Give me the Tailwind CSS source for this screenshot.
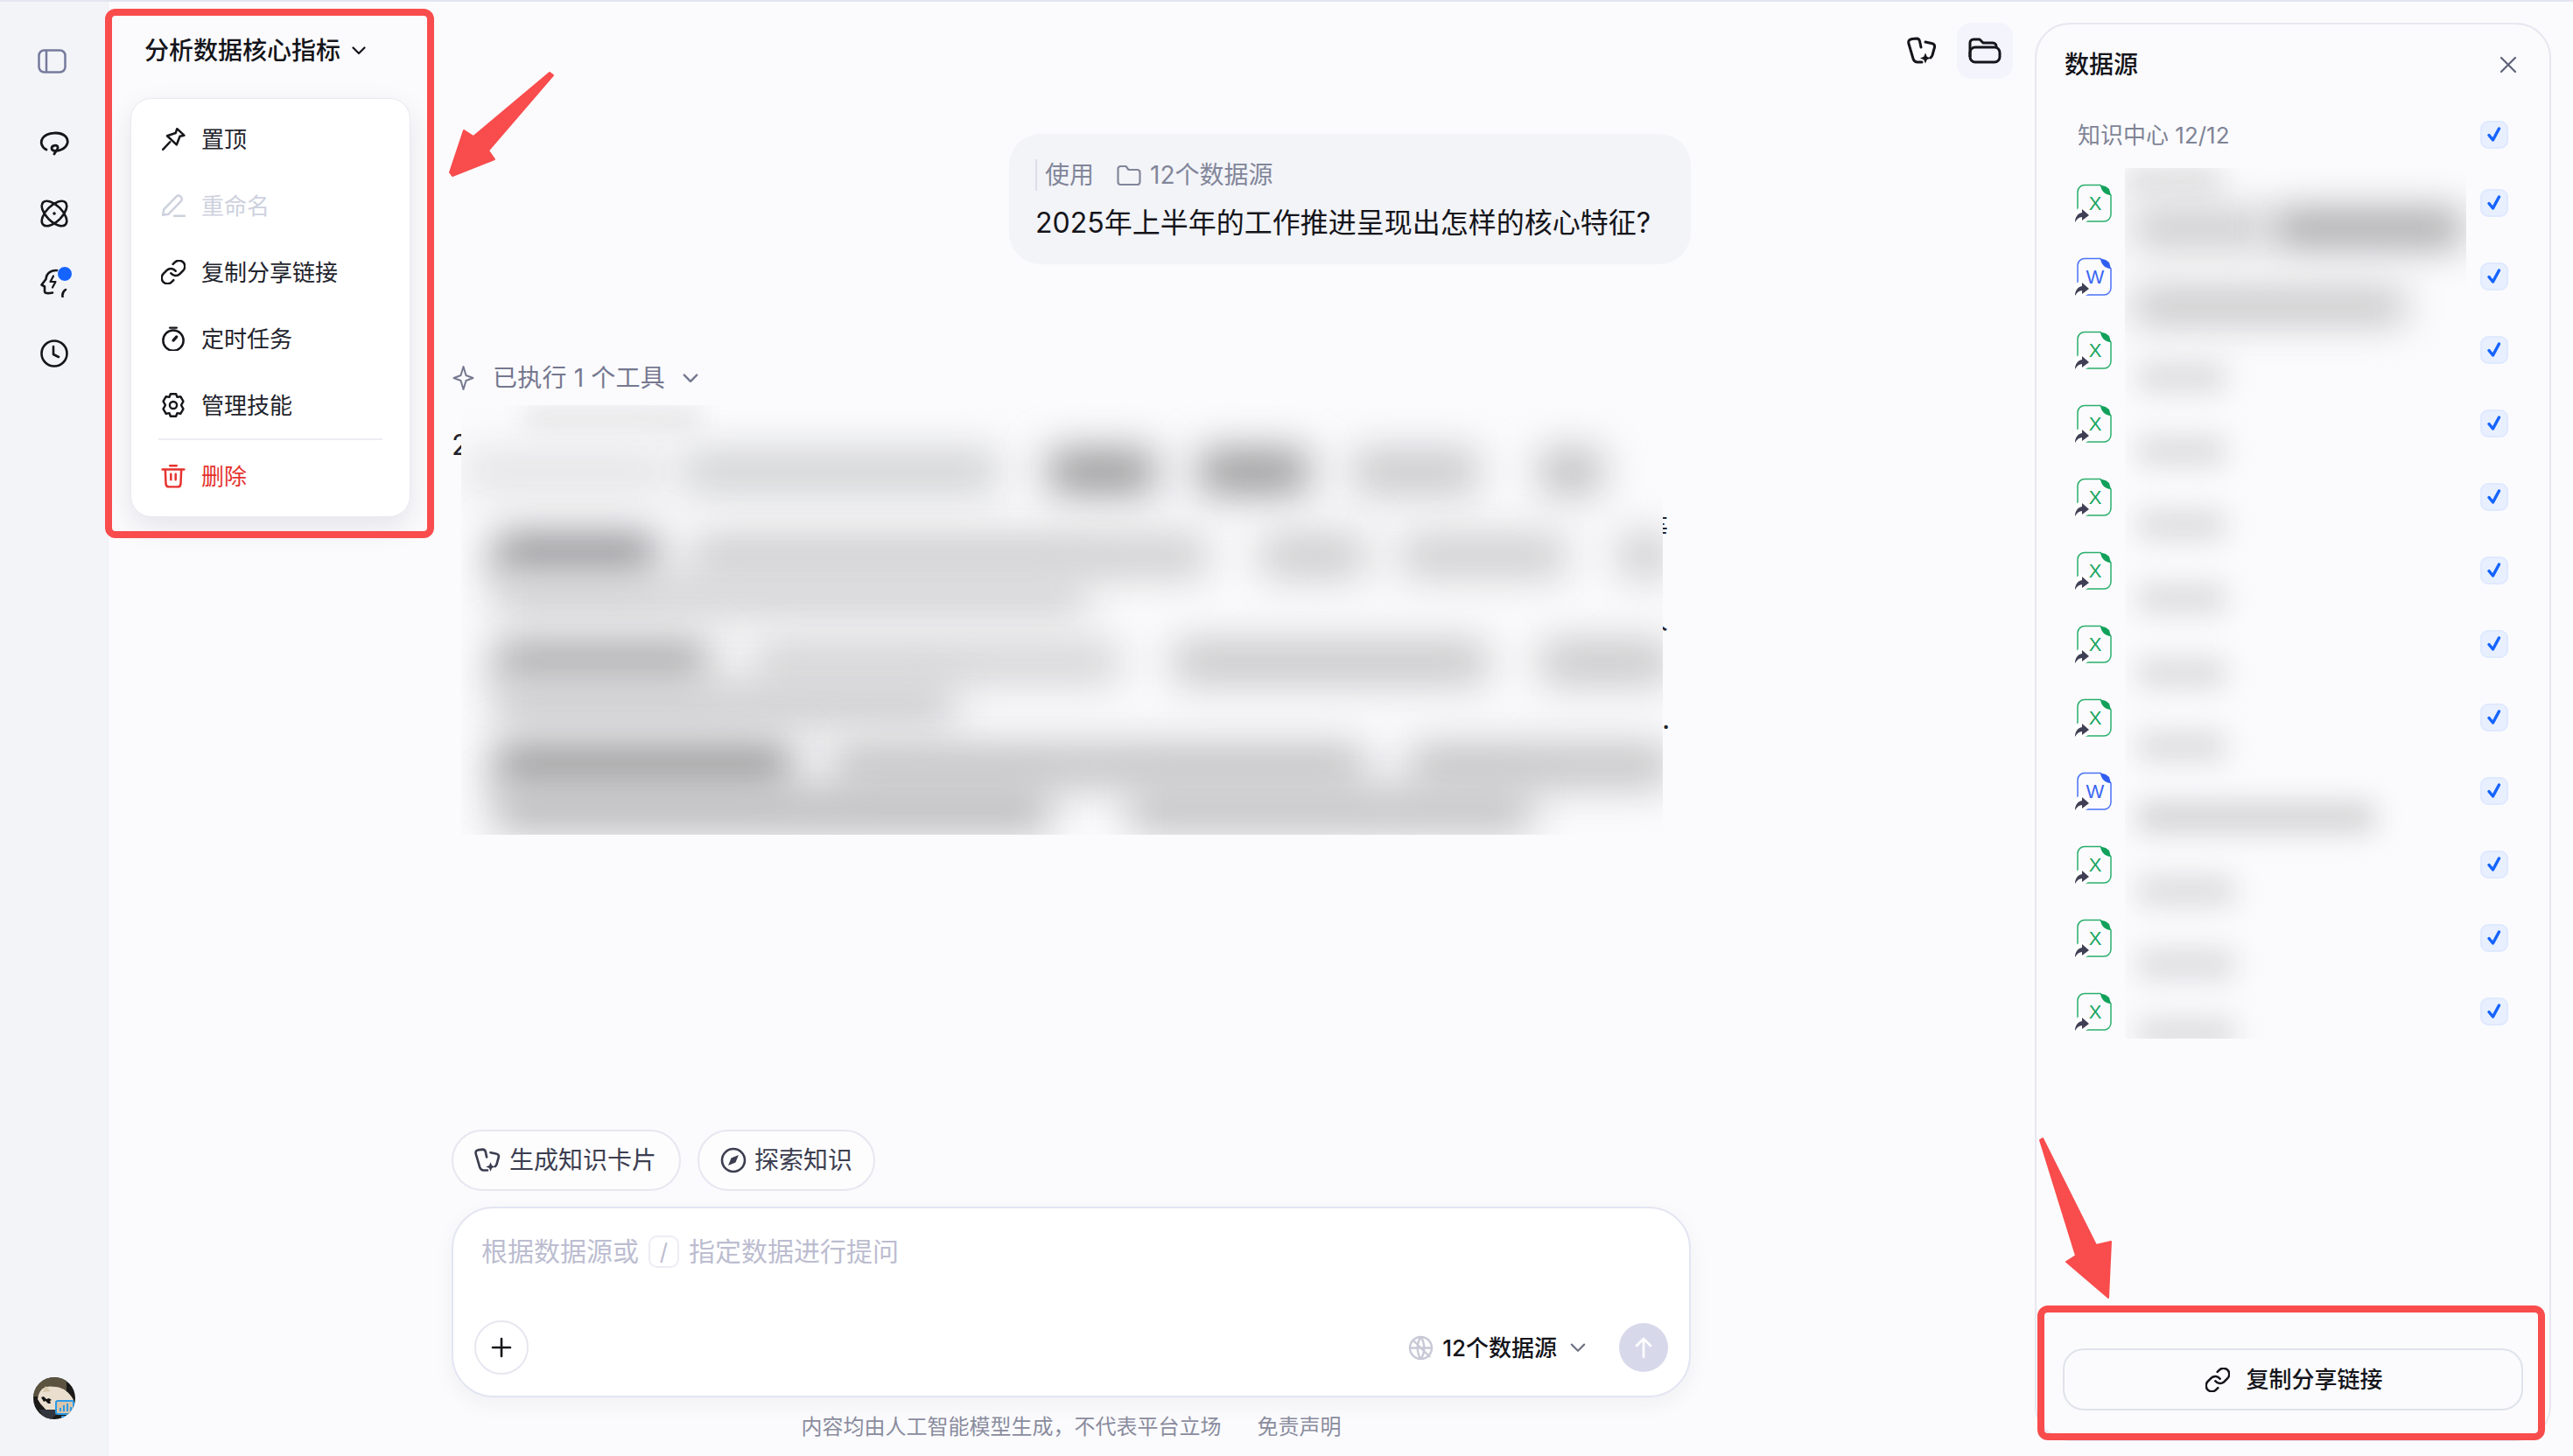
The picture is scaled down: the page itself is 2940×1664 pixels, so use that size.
<!DOCTYPE html>
<html lang="zh-CN">
<head>
<meta charset="utf-8">
<title>分析数据核心指标</title>
<script src="https://cdn.jsdelivr.net/npm/@tailwindcss/browser@4"></script>
</head>
<body class="relative w-[2940px] h-[1664px] overflow-hidden bg-[#fbfbfd] text-[#14141a] font-[Inter,'Noto_Sans_CJK_SC',sans-serif]">

<!-- shared icons -->
<svg class="hidden">
    <symbol id="xls" viewBox="0 0 44 46">
        <path d="M12 2.500h19l12 11.500v22a8 8 0 0 1-8 8H13a8 8 0 0 1-8-8V10a8 8 0 0 1 8-7.500z" fill="none" stroke="#2cae6c" stroke-width="1.500"/>
        <path d="M31 2.500c1 7 5 11 12 11.500l-2-7-4-3z" fill="#12a15b"/>
        <text x="25" y="31" text-anchor="middle" font-family="Liberation Sans" font-size="22" fill="#18a55f">X</text>
        <circle cx="10" cy="37" r="9" fill="#fff"/>
        <path d="M2 45c0-6 3-10 8-11v-4l8 7-8 6v-4c-3 0-6 2-8 6z" fill="#3f3f55"/>
    </symbol>
    <symbol id="doc" viewBox="0 0 44 46">
        <path d="M12 2.500h19l12 11.500v22a8 8 0 0 1-8 8H13a8 8 0 0 1-8-8V10a8 8 0 0 1 8-7.500z" fill="none" stroke="#4a72f5" stroke-width="1.500"/>
        <path d="M31 2.500c1 7 5 11 12 11.500l-2-7-4-3z" fill="#2f5ff0"/>
        <text x="25" y="31" text-anchor="middle" font-family="Liberation Sans" font-size="22" fill="#3a66f2">W</text>
        <circle cx="10" cy="37" r="9" fill="#fff"/>
        <path d="M2 45c0-6 3-10 8-11v-4l8 7-8 6v-4c-3 0-6 2-8 6z" fill="#3f3f55"/>
    </symbol>
    <symbol id="check" viewBox="0 0 32 32">
        <rect x="1" y="1" width="30" height="30" rx="8" fill="#e8f0ff" stroke="#dfe9ff" stroke-width="2"/>
        <path d="M10 16.500l4.500 5.500L21.500 9" fill="none" stroke="#1664ff" stroke-width="3.500" stroke-linecap="round" stroke-linejoin="round"/>
    </symbol>
    <symbol id="cards" viewBox="0 0 34 32">
        <path d="M2 8c-1-4 1-5 4-5.500l5-.5c2 0 3 1 3.500 3L16 12M17 29h-5c-3 0-4-1-5-4L2 8M21 6l7 1.500c3 .5 4 2.500 3.500 4.500L29 21c-.2 1-1 2-2 3" fill="none" stroke="currentColor" stroke-width="3" stroke-linecap="round" stroke-linejoin="round"/>
        <path d="M21 18.500l1.800 4.200 4.200 1.800-4.200 1.800-1.800 4.200-1.800-4.200-4.200-1.800 4.200-1.800z" fill="currentColor"/>
    </symbol>
    <symbol id="link" viewBox="1.500 1.500 21 21">
        <path d="M10 13a5 5 0 0 0 7.540.540l3-3a5 5 0 0 0-7.070-7.070l-1.720 1.710M14 11a5 5 0 0 0-7.540-.540l-3 3a5 5 0 0 0 7.070 7.070l1.710-1.710" fill="none" stroke="currentColor" stroke-width="1.900" stroke-linecap="round" stroke-linejoin="round"/>
    </symbol>
</svg>

<div class="flex h-full border-t-2 border-[#e3e6f0]">
    <!-- Sidebar -->
    <aside class="w-[124px] shrink-0 flex flex-col items-center pt-[54px] pb-[42px] bg-[#f3f4f8] border-r border-[#eeeff4] text-[#15151a]">
        <svg class="w-[33px] h-[28px] -ml-1" viewBox="0 0 33 28" fill="none" stroke="#767a9c" stroke-width="2.500"><rect x="1.500" y="1.500" width="30" height="25" rx="6"/><path d="M10 2v24"/></svg>
        <svg class="w-[34px] h-[28px] mt-[66px]" viewBox="0 0 34 28" fill="none" stroke="currentColor" stroke-width="2.800" stroke-linecap="round"><path d="M8 21C2 18 .8 12 4 7.500 9 1 24 0 30 6c4.500 5 2 12-5 15-4 1.800-11 2.500-11-1.500 0-3.500 6-4.500 7-1.500 1 2.500-3 5.500-4 8"/></svg>
        <svg class="w-[32px] h-[32px] mt-[50px]" viewBox="0 0 32 32" fill="none" stroke="currentColor" stroke-width="2.600"><ellipse cx="16" cy="16" rx="18" ry="9" transform="rotate(45 16 16)"/><ellipse cx="16" cy="16" rx="18" ry="9" transform="rotate(-45 16 16)"/><circle cx="16" cy="16" r="1.800" fill="currentColor" stroke="none"/></svg>
        <div class="relative w-[32px] h-[33px] mt-[47px]">
            <svg class="w-full h-full" viewBox="0 0 32 33" fill="none" stroke="currentColor" stroke-width="2.600" stroke-linecap="round" stroke-linejoin="round"><path d="M22 2.500C13 .5 7 5 6.500 12L1.500 18.500l3.500 2v5.500c0 2.500 4 2.500 9 1.500"/><path d="M29 24c-3 2-4 5-3.500 8"/><path d="M15 8.500l-3.500 6.500h6l-3.500 6.500" stroke-width="2.200"/></svg>
            <span class="absolute -right-[5px] -top-[3px] w-[18px] h-[18px] rounded-full bg-[#1664ff] border border-white"></span>
        </div>
        <svg class="w-[32px] h-[32px] mt-[48px]" viewBox="0 0 32 32" fill="none" stroke="currentColor" stroke-width="2.600" stroke-linecap="round" stroke-linejoin="round"><circle cx="16" cy="16" r="14.500"/><path d="M15 8v9l6 3"/></svg>
        <svg class="w-[48px] h-[48px] mt-auto rounded-full" viewBox="0 0 48 48">
            <rect width="48" height="48" fill="#1b1a18"/>
            <rect width="38" height="22" fill="#5b5240"/>
            <path d="M5 25C7 12 14 9 26 11c9 1 16 7 20 15l-6 15H18L8 30z" fill="#eadfcf"/>
            <path d="M11 17l3-7 6 6z" fill="#d9c7ac"/>
            <path d="M9 23l3-1 3 3 3-1 3 2-2 1 1 3-3 0-3-3-2 1z" fill="#141414"/>
            <path d="M6 37h20v6l-6 5h-6z" fill="#34363f"/>
            <rect x="26" y="27" width="20" height="15" rx="2" fill="#d8c5ac" stroke="#2a9be8" stroke-width="2"/>
            <path d="M31 39v-4M35 39v-7M39 39v-9M43 39v-5" stroke="#2a9be8" stroke-width="2"/>
            <path d="M32 45h10" stroke="#2a9be8" stroke-width="2"/>
        </svg>
    </aside>

    <!-- Main -->
    <main class="relative flex-1 flex flex-col min-w-0">
        <header class="flex items-center justify-between h-[64px] mt-6 pl-[41px] pr-[25px]">
            <button class="flex items-center gap-[13px] text-[28px] font-medium">
                分析数据核心指标
                <svg class="w-[16px] h-[10px]" viewBox="0 0 16 10" fill="none" stroke="currentColor" stroke-width="2.200" stroke-linecap="round" stroke-linejoin="round"><path d="M1.500 1.500L8 8l6.500-6.500"/></svg>
            </button>
            <div class="flex items-center gap-[23px]">
                <svg class="w-[34px] h-[32px]"><use href="#cards"/></svg>
                <button class="w-[64px] h-[64px] flex items-center justify-center rounded-2xl bg-[#f3f4fc]">
                    <svg class="w-[38px] h-[30px]" viewBox="0 0 38 30" fill="none" stroke="currentColor" stroke-width="3" stroke-linejoin="round"><path d="M2 22V6a4 4 0 0 1 4-4h7l4 4h11a4 4 0 0 1 4 4v2"/><rect x="2" y="11" width="34" height="17" rx="6"/></svg>
                </button>
            </div>
        </header>

        <!-- Title dropdown -->
        <div class="absolute left-[25px] top-[110px] z-10 w-[320px] h-[479px] pt-[8px] bg-white border border-[#e8e9f0] rounded-3xl shadow-[0_12px_32px_rgba(40,44,70,0.1)] text-[26px] text-[#22232c]">
            <div class="flex items-center gap-[18px] h-[76px] pl-[34px]">
                <svg class="w-[28px] h-[28px]" viewBox="0 0 26 26" fill="none" stroke="#15151a" stroke-width="2.300" stroke-linejoin="round" stroke-linecap="round"><path d="M17 2l7.500 7-4.500 1-3.500 9-10-9.500 9-3z"/><path d="M2 24l7.500-8"/></svg>
                <span>置顶</span>
            </div>
            <div class="flex items-center gap-[18px] h-[76px] pl-[34px] text-[#cdd1de]">
                <svg class="w-[28px] h-[28px]" viewBox="0 0 26 26" fill="none" stroke="currentColor" stroke-width="2.300" stroke-linejoin="round" stroke-linecap="round"><path d="M2 23l1-6L16 3.500c1.500-1.500 3.500-1.500 5 0s1.500 3.500 0 5L8 22z"/><path d="M14 24h11"/></svg>
                <span>重命名</span>
            </div>
            <div class="flex items-center gap-[18px] h-[76px] pl-[34px]">
                <svg class="w-[28px] h-[28px] text-[#15151a]"><use href="#link"/></svg>
                <span>复制分享链接</span>
            </div>
            <div class="flex items-center gap-[18px] h-[76px] pl-[34px]">
                <svg class="w-[28px] h-[28px]" viewBox="0 0 26 26" fill="none" stroke="#15151a" stroke-width="2.300" stroke-linecap="round"><circle cx="13" cy="15" r="10.800"/><path d="M9.500 1.500h7"/><path d="M13 15l3.500-4" stroke-width="3"/></svg>
                <span>定时任务</span>
            </div>
            <div class="flex items-center gap-[18px] h-[76px] pl-[34px]">
                <svg class="w-[28px] h-[28px]" viewBox="2 1 20 22" fill="none" stroke="#15151a" stroke-width="1.900" stroke-linejoin="round"><path d="M9.500 2h5l1 2.800 3-.5 2.500 4.300L19.100 12l1.900 3.400-2.500 4.300-3-.5-1 2.800h-5l-1-2.800-3 .5L3 15.400 4.900 12 3 8.600l2.500-4.300 3 .5z"/><circle cx="12" cy="12" r="3.200"/></svg>
                <span>管理技能</span>
            </div>
            <div class="mx-[31px] h-[2px] bg-[#eceef4]"></div>
            <div class="flex items-center gap-[18px] h-[82px] pl-[34px] text-[#e5322d]">
                <svg class="w-[28px] h-[28px]" viewBox="0 0 26 26" fill="none" stroke="currentColor" stroke-width="2.300" stroke-linecap="round" stroke-linejoin="round"><path d="M1.500 6h23M9.500 2h7M4.500 6l.6 15c.1 2 1.400 3.500 3.400 3.500h9c2 0 3.300-1.500 3.400-3.500l.6-15M10.500 11v6M15.500 11v6"/></svg>
                <span>删除</span>
            </div>
        </div>

        <!-- Conversation -->
        <section class="flex-1 flex flex-col ml-[392px] w-[1416px] min-h-0">
            <div class="self-end w-[779px] h-[149px] mt-[63px] pl-[30px] pt-[29px] rounded-[36px] bg-[#f3f4f8]">
                <div class="flex items-center h-[36px] border-l-2 border-[#dcdee8] pl-[9px] text-[28px] text-[#82869a]">
                    <span>使用</span>
                    <svg class="w-[28px] h-[26px] ml-[26px] mr-[10px]" viewBox="0 0 28 26" fill="none" stroke="currentColor" stroke-width="2.200" stroke-linejoin="round"><path d="M1.500 6a3 3 0 0 1 3-3h6l3 4h10a3 3 0 0 1 3 3v11a3 3 0 0 1-3 3h-19a3 3 0 0 1-3-3z"/></svg>
                    <span>12个数据源</span>
                </div>
                <p class="mt-[15px] text-[32px] leading-[44px]">2025年上半年的工作推进呈现出怎样的核心特征?</p>
            </div>

            <div class="flex items-center h-[40px] mt-[110px] text-[28px] text-[#75788f]">
                <svg class="w-[27px] h-[30px] mr-[20px]" viewBox="0 0 27 30" fill="none" stroke="currentColor" stroke-width="2" stroke-linejoin="round"><path d="M13.500 2l3 10 8 3-8 3-3 10-3-10-8-3 8-3z"/></svg>
                <span class="tracking-[0.2px]">已执行 1 个工具</span>
                <svg class="w-[18px] h-[11px] ml-[20px]" viewBox="0 0 16 10" fill="none" stroke="currentColor" stroke-width="2.200" stroke-linecap="round" stroke-linejoin="round"><path d="M1.500 1.500L8 8l6.500-6.500"/></svg>
            </div>

            <!-- Answer, blurred out in the screenshot -->
            <div class="relative h-[502px] text-[32px] leading-[44px] text-[#22232c]">
                <p class="pt-[35px]">2025年上半年</p>
                <span class="absolute left-[1358px] top-[130px]">等</span>
                <span class="absolute left-[1358px] top-[234px]">人</span>
                <span class="absolute left-[1383px] top-[348px]">.</span>
                <div class="absolute left-[11px] top-[11px] w-[1373px] h-[491px] overflow-hidden bg-[#fbfbfd]">
                    <div class="flex h-[26px] mt-[2px]"><div class="shrink-0 ml-[73px] w-[200px] blur-[14px] bg-[#e6e6e8]"></div></div>
                    <div class="flex h-[48px] mt-[24px]">
                        <div class="shrink-0 ml-[3px] w-[230px] blur-[24px] bg-[#e2e2e4]"></div>
                        <div class="shrink-0 ml-[19px] w-[363px] blur-[24px] bg-[#cecfd0]"></div>
                        <div class="shrink-0 ml-[56px] w-[122px] blur-[24px] bg-[#929294]"></div>
                        <div class="shrink-0 ml-[50px] w-[125px] blur-[24px] bg-[#929294]"></div>
                        <div class="shrink-0 ml-[50px] w-[145px] blur-[24px] bg-[#c4c4c6]"></div>
                        <div class="shrink-0 ml-[70px] w-[70px] blur-[24px] bg-[#b8b8ba]"></div>
                    </div>
                    <div class="flex h-[48px] mt-[48px]">
                        <div class="shrink-0 ml-[38px] w-[185px] blur-[24px] bg-[#8a8a8d]"></div>
                        <div class="shrink-0 ml-[40px] w-[590px] blur-[24px] bg-[#cbcbcd]"></div>
                        <div class="shrink-0 ml-[60px] w-[120px] blur-[24px] bg-[#c8c8ca]"></div>
                        <div class="shrink-0 ml-[40px] w-[190px] blur-[24px] bg-[#cbcbcd]"></div>
                        <div class="shrink-0 ml-[60px] w-[60px] blur-[24px] bg-[#c8c8ca]"></div>
                    </div>
                    <div class="flex h-[48px] -mt-[3px]"><div class="shrink-0 ml-[38px] w-[675px] blur-[24px] bg-[#d2d2d4]"></div></div>
                    <div class="flex h-[48px] mt-[29px]">
                        <div class="shrink-0 ml-[38px] w-[245px] blur-[24px] bg-[#a4a4a6]"></div>
                        <div class="shrink-0 ml-[50px] w-[420px] blur-[24px] bg-[#d2d2d4]"></div>
                        <div class="shrink-0 ml-[60px] w-[360px] blur-[24px] bg-[#c4c4c6]"></div>
                        <div class="shrink-0 ml-[60px] w-[150px] blur-[24px] bg-[#c4c4c6]"></div>
                    </div>
                    <div class="flex h-[48px] -mt-[1px]"><div class="shrink-0 ml-[38px] w-[525px] blur-[24px] bg-[#cbcbcd]"></div></div>
                    <div class="flex h-[48px] mt-[23px]">
                        <div class="shrink-0 ml-[38px] w-[340px] blur-[24px] bg-[#929294]"></div>
                        <div class="shrink-0 ml-[45px] w-[610px] blur-[24px] bg-[#c0c0c2]"></div>
                        <div class="shrink-0 ml-[50px] w-[300px] blur-[24px] bg-[#c0c0c2]"></div>
                    </div>
                    <div class="flex h-[50px] mt-[2px]">
                        <div class="shrink-0 ml-[38px] w-[635px] blur-[24px] bg-[#b8b8ba]"></div>
                        <div class="shrink-0 ml-[90px] w-[460px] blur-[24px] bg-[#c0c0c2]"></div>
                    </div>
                </div>
            </div>

            <!-- Composer -->
            <div class="mt-auto flex gap-[19px] text-[28px] text-[#3c3e50]">
                <button class="flex items-center gap-[10px] h-[70px] pl-[24px] pr-[26px] bg-white/60 border-2 border-[#e6e7f0] rounded-full">
                    <svg class="w-[30px] h-[30px]"><use href="#cards"/></svg>
                    生成知识卡片
                </button>
                <button class="flex items-center gap-[9px] h-[70px] pl-[24px] pr-[24px] bg-white/60 border-2 border-[#e6e7f0] rounded-full">
                    <svg class="w-[30px] h-[30px]" viewBox="0 0 30 30"><circle cx="15" cy="15" r="13" fill="none" stroke="currentColor" stroke-width="2.600"/><path d="M21 9l-3.500 8.500L9 21l3.500-8.500z" fill="currentColor"/></svg>
                    探索知识
                </button>
            </div>
            <div class="flex flex-col justify-between h-[218px] mt-[18px] pt-[29px] pb-[24px] bg-white border-2 border-[#e3e5f2] rounded-[48px] shadow-[0_8px_24px_rgba(40,44,70,0.05)]">
                <div class="flex items-center h-[40px] pl-[32px] text-[30px] text-[#bcbdd0]">
                    <span>根据数据源或</span>
                    <span class="flex items-center justify-center w-[35px] h-[37px] mx-[11px] border-2 border-[#ecedf5] rounded-[10px] text-[26px]">/</span>
                    <span>指定数据进行提问</span>
                </div>
                <div class="flex items-center justify-between pl-[24px] pr-[24px]">
                    <button class="w-[62px] h-[62px] flex items-center justify-center rounded-full border-2 border-[#e6e7f0]">
                        <svg class="w-[26px] h-[26px]" viewBox="0 0 26 26" stroke="#15151a" stroke-width="2.600" stroke-linecap="round"><path d="M13 3v20M3 13h20"/></svg>
                    </button>
                    <div class="flex items-center text-[26px] font-medium">
                        <svg class="w-[29px] h-[29px] mr-[10px]" viewBox="0 0 29 29" fill="none" stroke="#c8c9d6" stroke-width="2.400"><circle cx="14.500" cy="14.500" r="12.500"/><path d="M2 14.500h25M14.500 2c-5 7-5 18 0 25M14.500 2c5 7 5 18 0 25M5 5l20 20"/></svg>
                        <span>12个数据源</span>
                        <svg class="w-[18px] h-[11px] ml-[15px] mr-[38px]" viewBox="0 0 16 10" fill="none" stroke="#6f7284" stroke-width="2" stroke-linecap="round" stroke-linejoin="round"><path d="M1.500 1.500L8 8l6.500-6.500"/></svg>
                        <button class="w-[56px] h-[56px] flex items-center justify-center rounded-full bg-[#d7d9eb]">
                            <svg class="w-[24px] h-[26px]" viewBox="0 0 24 26" fill="none" stroke="#fff" stroke-width="2.600" stroke-linecap="round" stroke-linejoin="round"><path d="M12 24V3M4 11l8-8 8 8"/></svg>
                        </button>
                    </div>
                </div>
            </div>
            <footer class="flex justify-center gap-[41px] h-[32px] mt-[18px] mb-[17px] text-[24px] leading-[32px] text-[#8a8c9e]">
                <span>内容均由人工智能模型生成，不代表平台立场</span>
                <span>免责声明</span>
            </footer>
        </section>
    </main>

    <!-- Data sources -->
    <aside class="relative w-[590px] shrink-0 flex flex-col mt-6 mb-[17px] mr-[25px] border-2 border-[#e6e7f0] rounded-[40px]">
        <div class="flex items-center justify-between h-[92px] pl-[32px] pr-[37px]">
            <h2 class="text-[28px] font-medium">数据源</h2>
            <svg class="w-[20px] h-[20px]" viewBox="0 0 20 20" stroke="#5f6278" stroke-width="2.200" stroke-linecap="round"><path d="M2 2l16 16M18 2L2 18"/></svg>
        </div>
        <div class="flex items-center justify-between h-[68px] pl-[47px] pr-[47px] mb-[2px]">
            <span class="text-[26px] text-[#7f8496]">知识中心 12/12</span>
            <svg class="w-[32px] h-[32px]"><use href="#check"/></svg>
        </div>
        <ul>
            <li class="flex items-center justify-between h-[84px] pl-[42px] pr-[47px]"><svg class="w-[44px] h-[46px]"><use href="#xls"/></svg><svg class="w-[32px] h-[32px]"><use href="#check"/></svg></li>
            <li class="flex items-center justify-between h-[84px] pl-[42px] pr-[47px]"><svg class="w-[44px] h-[46px]"><use href="#doc"/></svg><svg class="w-[32px] h-[32px]"><use href="#check"/></svg></li>
            <li class="flex items-center justify-between h-[84px] pl-[42px] pr-[47px]"><svg class="w-[44px] h-[46px]"><use href="#xls"/></svg><svg class="w-[32px] h-[32px]"><use href="#check"/></svg></li>
            <li class="flex items-center justify-between h-[84px] pl-[42px] pr-[47px]"><svg class="w-[44px] h-[46px]"><use href="#xls"/></svg><svg class="w-[32px] h-[32px]"><use href="#check"/></svg></li>
            <li class="flex items-center justify-between h-[84px] pl-[42px] pr-[47px]"><svg class="w-[44px] h-[46px]"><use href="#xls"/></svg><svg class="w-[32px] h-[32px]"><use href="#check"/></svg></li>
            <li class="flex items-center justify-between h-[84px] pl-[42px] pr-[47px]"><svg class="w-[44px] h-[46px]"><use href="#xls"/></svg><svg class="w-[32px] h-[32px]"><use href="#check"/></svg></li>
            <li class="flex items-center justify-between h-[84px] pl-[42px] pr-[47px]"><svg class="w-[44px] h-[46px]"><use href="#xls"/></svg><svg class="w-[32px] h-[32px]"><use href="#check"/></svg></li>
            <li class="flex items-center justify-between h-[84px] pl-[42px] pr-[47px]"><svg class="w-[44px] h-[46px]"><use href="#xls"/></svg><svg class="w-[32px] h-[32px]"><use href="#check"/></svg></li>
            <li class="flex items-center justify-between h-[84px] pl-[42px] pr-[47px]"><svg class="w-[44px] h-[46px]"><use href="#doc"/></svg><svg class="w-[32px] h-[32px]"><use href="#check"/></svg></li>
            <li class="flex items-center justify-between h-[84px] pl-[42px] pr-[47px]"><svg class="w-[44px] h-[46px]"><use href="#xls"/></svg><svg class="w-[32px] h-[32px]"><use href="#check"/></svg></li>
            <li class="flex items-center justify-between h-[84px] pl-[42px] pr-[47px]"><svg class="w-[44px] h-[46px]"><use href="#xls"/></svg><svg class="w-[32px] h-[32px]"><use href="#check"/></svg></li>
            <li class="flex items-center justify-between h-[84px] pl-[42px] pr-[47px]"><svg class="w-[44px] h-[46px]"><use href="#xls"/></svg><svg class="w-[32px] h-[32px]"><use href="#check"/></svg></li>
        </ul>
        <!-- file names, blurred in the screenshot -->
        <div class="absolute left-[101px] top-[164px] w-[390px] h-[995px] overflow-hidden bg-[#fbfbfd]">
            <div class="h-[30px] w-[110px] blur-[16px] bg-[#dcdcde]"></div>
            <div class="flex h-[44px] mt-[17px]">
                <div class="shrink-0 ml-[10px] w-[150px] blur-[22px] bg-[#cacacc]"></div>
                <div class="shrink-0 ml-[10px] w-[215px] blur-[22px] bg-[#a8a8aa]"></div>
            </div>
            <div class="h-[40px] w-[310px] ml-[10px] mt-[47px] blur-[22px] bg-[#c4c4c6]"></div>
            <div class="h-[32px] w-[100px] ml-[15px] mt-[45px] blur-[16px] bg-[#dadadc]"></div>
            <div class="h-[32px] w-[100px] ml-[15px] mt-[52px] blur-[16px] bg-[#dadadc]"></div>
            <div class="h-[32px] w-[100px] ml-[15px] mt-[53px] blur-[16px] bg-[#dadadc]"></div>
            <div class="h-[32px] w-[100px] ml-[15px] mt-[52px] blur-[16px] bg-[#dadadc]"></div>
            <div class="h-[32px] w-[100px] ml-[15px] mt-[53px] blur-[16px] bg-[#dadadc]"></div>
            <div class="h-[32px] w-[100px] ml-[15px] mt-[52px] blur-[16px] bg-[#dadadc]"></div>
            <div class="h-[32px] w-[270px] ml-[15px] mt-[49px] blur-[16px] bg-[#d0d0d2]"></div>
            <div class="h-[32px] w-[110px] ml-[15px] mt-[52px] blur-[16px] bg-[#dadadc]"></div>
            <div class="h-[32px] w-[110px] ml-[15px] mt-[52px] blur-[16px] bg-[#dadadc]"></div>
            <div class="h-[32px] w-[110px] ml-[15px] mt-[47px] blur-[16px] bg-[#dadadc]"></div>
        </div>
        <button class="flex items-center justify-center gap-[18px] h-[71px] mt-auto mx-[30px] mb-[33px] border-2 border-[#e0e3ec] rounded-3xl text-[26px] font-medium">
            <svg class="w-[28px] h-[28px] ml-[3px]"><use href="#link"/></svg>
            复制分享链接
        </button>
    </aside>
</div>

<!-- Red annotations drawn over the screenshot -->
<div class="absolute left-[120px] top-[10px] w-[376px] h-[605px] border-[8px] border-[#f94c4c] rounded-xl z-20"></div>
<div class="absolute left-[2328px] top-[1492px] w-[580px] h-[154px] border-[8px] border-[#f94c4c] rounded-xl z-20"></div>
<svg class="absolute left-0 top-0 w-[2940px] h-[1664px] z-20 pointer-events-none" viewBox="0 0 2940 1664" fill="#f94c4c" stroke="#f94c4c" stroke-width="2" stroke-linejoin="round">
    <path d="M628 83l4 3-74 86 7 10-48 19-3-4 16-48 11 7z"/>
    <path d="M2331 1303L2334 1301 2395 1423 2412 1419 2409 1483 2361 1442 2372 1435z"/>
</svg>
</body>
</html>
